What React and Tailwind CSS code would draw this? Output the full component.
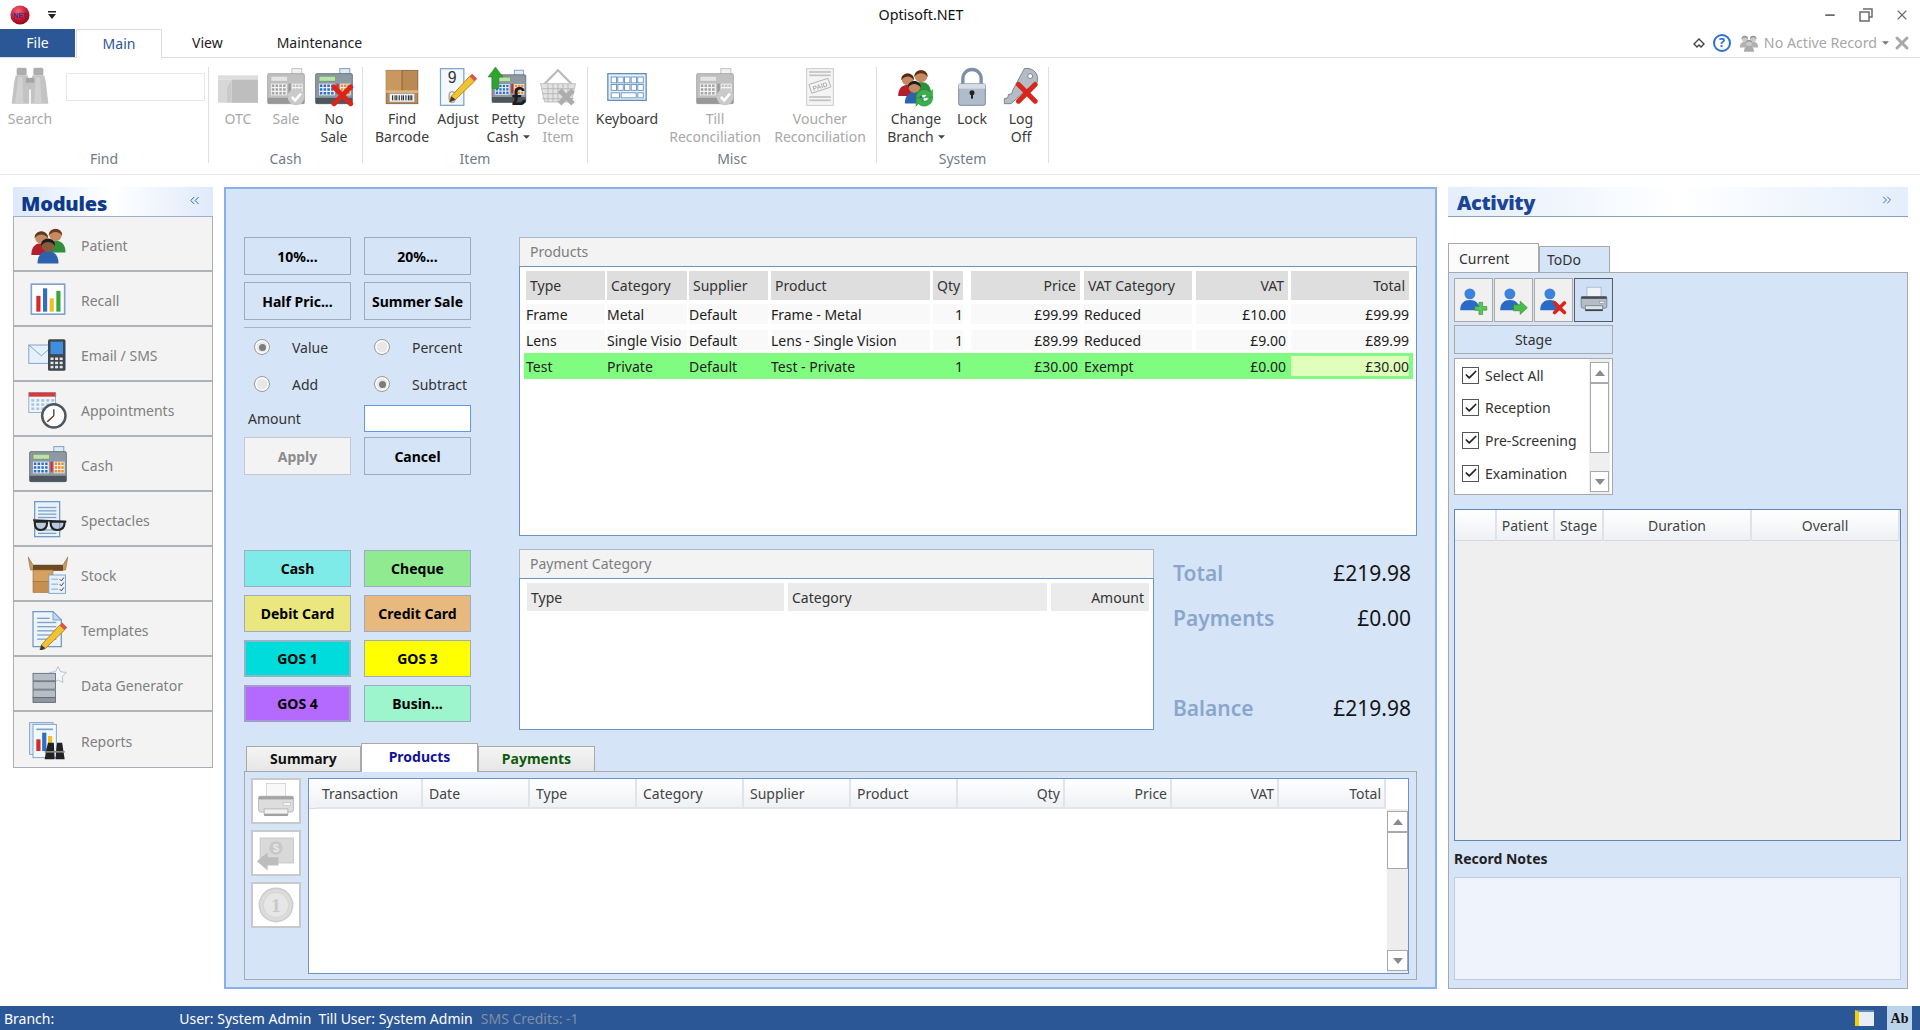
import { ChevronsLeft, ChevronsRight, Check, X, Minus } from "lucide-react";

const Svg = ({ children, className = "w-10 h-10" }) => (
  <svg viewBox="0 0 48 48" className={className}>{children}</svg>
);

const RedX = ({ x = 24, y = 24, s = 10, w = 6 }) => (
  <path d={`M${x} ${y}L${x + s * 2} ${y + s * 2}M${x + s * 2} ${y}L${x} ${y + s * 2}`} stroke="#d8261c" strokeWidth={w} strokeLinecap="round" />
);

const Person = ({ x, y, s = 1, shirt, hair = "#3d2a1c", skin = "#c58a62" }) => (
  <g transform={`translate(${x} ${y}) scale(${s})`}>
    <path d="M-12 25C-12 14-6 11 0 11C6 11 12 14 12 25Z" fill={shirt} />
    <circle cy="4" r="7.5" fill={skin} />
    <path d="M-8 5C-9-6 9-6 8 5C4-1-4-1-8 5Z" fill={hair} />
  </g>
);

const People = ({ className }) => (
  <Svg className={className}>
    <Person x={16} y={11} shirt="#b3202a" hair="#5a3a22" />
    <Person x={33} y={8} shirt="#2f8f3a" hair="#6b3a1e" />
    <Person x={24} y={20} s={1.05} shirt="#2d62ad" hair="#1e1e1e" skin="#8a5a3c" />
  </Svg>
);

const TillBody = () => (
  <>
    <rect x="31" y="2" width="12" height="11" fill="#dfeaf6" stroke="#6c8fb6" />
    <rect x="2" y="8" width="44" height="36" rx="1.5" fill="#8f99a3" stroke="#5c646c" />
    <rect x="6" y="11" width="20" height="6" fill="#b8e2a8" stroke="#5d7f52" strokeWidth=".6" />
    <rect x="6" y="20" width="19" height="14" fill="#e9eef3" />
    {[21, 25.5, 30].map((y) =>
      [7, 11.5, 16, 20.5].map((x) => <rect key={`${x}${y}`} x={x} y={y} width="3" height="3" fill="#2f6fc6" />)
    )}
    <rect x="27" y="20" width="2.6" height="12" fill="#d52b2b" />
    <rect x="31" y="20" width="13" height="14" fill="#e9eef3" />
    {[21, 25.5, 30].map((y) =>
      [32, 36, 40].map((x) => <rect key={`o${x}${y}`} x={x} y={y} width="3" height="3" fill="#ef8f2a" />)
    )}
    <rect x="2" y="37" width="44" height="7" fill="#4d555d" />
  </>
);

const TillCheck = ({ className }) => (
  <Svg className={className}>
    <TillBody />
    <circle cx="36" cy="36" r="10" fill="#a8a8a8" />
    <path d="M31 36l4 4 7-8" fill="none" stroke="#fff" strokeWidth="3" />
  </Svg>
);

const Binoculars = ({ className }) => (
  <Svg className={className}>
    <rect x="8" y="1" width="12" height="9" rx="2" fill="#777" />
    <rect x="28" y="1" width="12" height="9" rx="2" fill="#777" />
    <path d="M7 10h14l2 9v25H2l3-26z" fill="#9c9c9c" />
    <path d="M27 10h14l2 8 3 26H25V19z" fill="#9c9c9c" />
    <path d="M10 12h5l1 32H6zM31 12h5l2 32H29z" fill="#b4b4b4" />
    <rect x="19" y="13" width="10" height="6" fill="#6a6a6a" />
    <path d="M23 19h2v8h-2z" fill="#888" />
  </Svg>
);

const Otc = ({ className }) => (
  <Svg className={className}>
    <rect x="0" y="10" width="48" height="5" fill="#c8c8c8" />
    <rect x="16" y="15" width="32" height="28" fill="#949494" />
    <path d="M0 15h16l-6 10v18H0z" fill="#bdbdbd" />
    <path d="M10 25l6-10v28h-6z" fill="#a8a8a8" />
  </Svg>
);

const Barcode = ({ className }) => (
  <Svg className={className}>
    <rect x="5" y="4" width="38" height="40" fill="#b98a55" stroke="#8a6236" />
    <rect x="5" y="4" width="19" height="26" fill="#c9985f" />
    <path d="M24 4v26" stroke="#7f5a30" />
    <rect x="5" y="28" width="38" height="3" fill="#e2b77e" />
    <rect x="9" y="32" width="30" height="10" fill="#eef2f7" stroke="#8aa0b8" strokeWidth=".6" />
    {[12, 15, 17, 20, 23, 25, 28, 31, 33, 35].map((x) => (
      <rect key={x} x={x} y="34" width="1.4" height="6" fill="#333" />
    ))}
  </Svg>
);

const Pencil = ({ x = 0, y = 0 }) => (
  <g transform={`translate(${x} ${y})`}>
    <path d="M4 32L26 8l6 6L9 36l-7 3z" fill="#f2c230" stroke="#a67c12" strokeWidth="1" />
    <path d="M26 8l3-3 6 6-3 3z" fill="#d9534a" />
    <path d="M2 39l2-7 5 4z" fill="#3a3a3a" />
  </g>
);

const Adjust = ({ className }) => (
  <Svg className={className}>
    <rect x="3" y="2" width="28" height="44" fill="#f3f8fe" stroke="#7fa4cc" strokeWidth="1.5" />
    <text x="17" y="19" fontSize="19" textAnchor="middle" fontFamily="Liberation Sans" fill="#333">9</text>
    <text x="17" y="43" fontSize="19" textAnchor="middle" fontFamily="Liberation Sans" fill="#aaa">0</text>
    <Pencil x={12} y={3} />
  </Svg>
);

const PettyCash = ({ className }) => (
  <Svg className={className}>
    <g transform="translate(3 2) scale(.92)"><TillBody /></g>
    <path d="M9 0L18 12h-5v14H5V12H0z" fill="#2fa52f" stroke="#1e7a1e" strokeWidth=".6" />
    <text x="37" y="46" fontSize="30" fontWeight="bold" textAnchor="middle" fontFamily="Liberation Sans" fill="#1d1d1d">£</text>
  </Svg>
);

const Basket = ({ className }) => (
  <Svg className={className}>
    <path d="M8 20L24 4l16 16" fill="none" stroke="#8a8a8a" strokeWidth="2.5" />
    <path d="M3 20h42l-5 22H8z" fill="#cfcfcf" stroke="#8a8a8a" />
    {[12, 18, 24, 30, 36].map((x) => <path key={x} d={`M${x} 20v22`} stroke="#808080" />)}
    {[26, 32, 38].map((y) => <path key={y} d={`M5 ${y}h38`} stroke="#808080" />)}
    <path d="M26 28l16 16M42 28L26 44" stroke="#777" strokeWidth="6" />
  </Svg>
);

const Keyboard = ({ className }) => (
  <Svg className={className}>
    <rect x="1" y="8" width="46" height="32" fill="#e6eff9" stroke="#5b89bd" strokeWidth="1.5" />
    {[12, 21].map((y) =>
      [5, 13, 21, 29, 37].map((x) => <rect key={`${x}${y}`} x={x} y={y} width="6.5" height="7" fill="#fff" stroke="#5b89bd" />)
    )}
    <rect x="5" y="31" width="10" height="6" fill="#fff" stroke="#5b89bd" />
    <rect x="17" y="31" width="18" height="6" fill="#fff" stroke="#5b89bd" />
    <rect x="37" y="31" width="6.5" height="6" fill="#fff" stroke="#5b89bd" />
  </Svg>
);

const Voucher = ({ className }) => (
  <Svg className={className}>
    <rect x="8" y="2" width="32" height="44" fill="#eee" stroke="#999" />
    {[6, 10, 36, 40].map((y) => <path key={y} d={`M11 ${y}h26`} stroke="#999" strokeWidth="2" />)}
    <g transform="rotate(-18 24 23)">
      <rect x="12" y="17" width="24" height="11" fill="none" stroke="#777" />
      <text x="24" y="26" fontSize="8" fontWeight="bold" textAnchor="middle" fontFamily="Liberation Sans" fill="#777">PAID</text>
    </g>
  </Svg>
);

const ChangeBranch = ({ className }) => (
  <Svg className={className}>
    <Person x={14} y={11} s={0.95} shirt="#b3202a" hair="#4a2d18" />
    <Person x={30} y={7} shirt="#2f8f3a" hair="#5e3217" />
    <Person x={22} y={20} s={0.95} shirt="#2d62ad" hair="#1e1e1e" />
    <path d="M24 38a10 10 0 0 1 17-8l3-3v10h-10l3-3a6 6 0 0 0-9 4z" fill="#39b04a" stroke="#237a30" strokeWidth=".5" />
    <path d="M44 36a10 10 0 0 1-17 8l-3 3V37h10l-3 3a6 6 0 0 0 9-4z" fill="#39b04a" stroke="#237a30" strokeWidth=".5" />
  </Svg>
);

const Lock = ({ className }) => (
  <Svg className={className}>
    <path d="M13 22V14a11 11 0 0 1 22 0v8" fill="none" stroke="#7d8fa5" strokeWidth="4" />
    <rect x="8" y="20" width="32" height="26" rx="2" fill="#aebccb" stroke="#6d7b8b" />
    <rect x="8" y="20" width="32" height="6" fill="#d5dde6" />
    <circle cx="24" cy="31" r="3" fill="#222" />
    <rect x="22.8" y="31" width="2.4" height="7" fill="#222" />
  </Svg>
);

const LogOff = ({ className }) => (
  <Svg className={className}>
    <path d="M28 2c8-2 16 4 16 12 0 7-5 12-12 12L12 44H4v-6l4-1 1-4 4-1 1-4z" fill="#b5bcc5" stroke="#6d747d" />
    <circle cx="35" cy="11" r="3" fill="#fff" stroke="#6d747d" />
    <RedX x={21} y={21} s={10} w={6} />
  </Svg>
);

const BarChart = ({ className }) => (
  <Svg className={className}>
    <rect x="4" y="5" width="40" height="36" fill="#fff" stroke="#7fa4cc" strokeWidth="2" />
    <rect x="10" y="19" width="5" height="19" fill="#d62a2a" />
    <rect x="18" y="10" width="5" height="28" fill="#2f6fc6" />
    <rect x="26" y="22" width="5" height="16" fill="#f0c020" />
    <rect x="34" y="13" width="5" height="25" fill="#35a83c" />
  </Svg>
);

const MailPhone = ({ className }) => (
  <Svg className={className}>
    <rect x="1" y="12" width="30" height="22" fill="#e5f0fb" stroke="#6f97c4" />
    <path d="M1 12l15 13 15-13" fill="none" stroke="#6f97c4" />
    <rect x="24" y="5" width="21" height="38" rx="2" fill="#3e464e" />
    <rect x="27" y="8" width="15" height="15" fill="#3f8fe0" />
    {[27, 32, 37].map((y) => [27, 32.5, 38].map((x) => <rect key={`${x}${y}`} x={x} y={y} width="3.6" height="3" fill="#e5e5e5" />))}
  </Svg>
);

const CalClock = ({ className }) => (
  <Svg className={className}>
    <rect x="1" y="3" width="32" height="24" fill="#eef4fb" stroke="#7fa4cc" />
    <rect x="1" y="3" width="32" height="5" fill="#d63a3a" />
    {[11, 16, 21].map((y) => [4, 10, 16, 22, 28].map((x) => <rect key={`${x}${y}`} x={x} y={y} width="3.5" height="3" fill="#a9c3e2" />))}
    <circle cx="31" cy="31" r="14" fill="#fff" stroke="#4f565d" strokeWidth="3" />
    <path d="M31 31v-8M31 31l-8 7" stroke="#333" strokeWidth="1.5" />
    <path d="M31 31l-7 7" stroke="#d63a3a" strokeWidth="1.2" />
  </Svg>
);

const Spectacles = ({ className }) => (
  <Svg className={className}>
    <rect x="8" y="2" width="30" height="42" fill="#e9f1fa" stroke="#6f97c4" strokeWidth="1.5" />
    {[9, 13, 17, 21, 36, 40].map((y) => <path key={y} d={`M12 ${y}h22`} stroke="#7fa4cc" strokeWidth="1.6" />)}
    <path d="M6 24l40 2" stroke="#222" strokeWidth="2" />
    <path d="M8 26h15c0 7-3 10-8 10s-7-4-7-10zM27 26h17c0 7-3 10-9 10s-8-4-8-10z" fill="#8ca4bc" fillOpacity=".5" stroke="#222" strokeWidth="2.5" />
  </Svg>
);

const Stock = ({ className }) => (
  <Svg className={className}>
    <path d="M0 2l6 10h36l6-10-3 16H3z" fill="#c99a62" stroke="#8c6a3c" strokeWidth=".7" />
    <rect x="6" y="12" width="36" height="7" fill="#6d4a24" />
    <rect x="6" y="18" width="24" height="14" fill="#d5a160" stroke="#9a7038" strokeWidth=".7" />
    <rect x="6" y="32" width="24" height="13" fill="#c48f50" stroke="#9a7038" strokeWidth=".7" />
    <rect x="25" y="24" width="20" height="22" fill="#e8f1fa" stroke="#6f97c4" />
    {[29, 35, 41].map((y) => (
      <g key={y}>
        <path d={`M28 ${y}h8`} stroke="#6f97c4" />
        <path d={`M38 ${y}l2 2 3-4`} stroke="#222" fill="none" />
      </g>
    ))}
  </Svg>
);

const Templates = ({ className }) => (
  <Svg className={className}>
    <path d="M6 2h24l10 10v32H6z" fill="#eef4fb" stroke="#6f97c4" strokeWidth="1.5" />
    <path d="M30 2v10h10z" fill="#c5d8ec" stroke="#6f97c4" />
    {[10, 15, 20, 25, 30, 35].map((y) => <path key={y} d={`M11 ${y}h${y < 15 ? 15 : 23}`} stroke="#7fa4cc" strokeWidth="1.6" />)}
    <Pencil x={12} y={10} />
  </Svg>
);

const DataGen = ({ className }) => (
  <Svg className={className}>
    <path d="M36 2l3 6 7 1-5 5 1 7-6-3-6 3 1-7-5-5 7-1z" fill="#f5f8fc" stroke="#a5b8cc" />
    {[10, 20, 30].map((y) => (
      <rect key={y} x="6" y={y} width="27" height="9" fill="#b6bec7" stroke="#5f6870" />
    ))}
    <rect x="6" y="39" width="27" height="6" fill="#8e969e" stroke="#5f6870" />
  </Svg>
);

const Reports = ({ className }) => (
  <Svg className={className}>
    <rect x="2" y="2" width="28" height="38" fill="#dfeaf6" stroke="#6f97c4" />
    <rect x="6" y="4" width="28" height="40" fill="#f3f8fe" stroke="#6f97c4" />
    <path d="M10 10h20" stroke="#7fa4cc" strokeWidth="2" />
    <rect x="10" y="22" width="5" height="14" fill="#d62a2a" />
    <rect x="17" y="14" width="5" height="22" fill="#2f6fc6" />
    <rect x="24" y="18" width="5" height="18" fill="#f0c020" />
    <path d="M22 34l2-8h7l1 20H20zM34 34l1-8h6l3 20H33z" fill="#222" />
    <rect x="20" y="36" width="24" height="2" fill="#888" />
  </Svg>
);

const UserBase = () => (
  <>
    <circle cx="18" cy="13" r="9" fill="#3d82dc" />
    <path d="M2 40c0-12 7-17 16-17s16 5 16 17z" fill="#2b6ac6" />
  </>
);

const UserAdd = () => (
  <Svg className="w-[29px] h-[29px]">
    <UserBase />
    <path d="M26 34h7v-7h6v7h7v6h-7v7h-6v-7h-7z" fill="#5ec45e" stroke="#2c8a2c" />
  </Svg>
);
const UserNext = () => (
  <Svg className="w-[29px] h-[29px]">
    <UserBase />
    <path d="M24 31h11v-6l12 11-12 11v-6H24z" fill="#4cbb4c" stroke="#2c8a2c" />
  </Svg>
);
const UserDel = () => (
  <Svg className="w-[29px] h-[29px]">
    <UserBase />
    <RedX x={26} y={28} s={8} w={6} />
  </Svg>
);

const Printer = ({ className }) => (
  <Svg className={className}>
    <rect x="12" y="2" width="24" height="18" fill="#eef3f9" stroke="#8fa2b6" />
    <rect x="2" y="18" width="44" height="20" rx="3" fill="#b4bdc6" stroke="#59626b" />
    <rect x="2" y="18" width="44" height="4" fill="#444c54" />
    <rect x="33" y="26" width="9" height="4" fill="#e9eef3" stroke="#59626b" strokeWidth=".6" />
    <rect x="9" y="34" width="30" height="7" fill="#dfe5ea" stroke="#59626b" />
    <rect x="9" y="40" width="30" height="3" fill="#3f474e" />
  </Svg>
);

const MoneyBack = ({ className }) => (
  <Svg className={className}>
    <rect x="5" y="6" width="40" height="30" fill="#d9d9d9" stroke="#c4c4c4" />
    <circle cx="24" cy="18" r="8" fill="#c7c7c7" />
    <text x="24" y="23" fontSize="14" fontWeight="bold" textAnchor="middle" fontFamily="Liberation Sans" fill="#e6e6e6">$</text>
    <path d="M1 34l13-11v6h13v10H14v6z" fill="#bdbdbd" />
  </Svg>
);

const Coin = ({ className }) => (
  <Svg className={className}>
    <circle cx="24" cy="24" r="21" fill="#dcdcdc" stroke="#cdcdcd" strokeWidth="2" />
    <circle cx="24" cy="24" r="16" fill="#e6e6e6" stroke="#cfcfcf" />
    <text x="24" y="33" fontSize="25" textAnchor="middle" fontFamily="Liberation Serif" fontWeight="bold" fill="#c9c9c9">1</text>
  </Svg>
);

const Logo = () => (
  <svg viewBox="0 0 24 24" className="w-[20px] h-[20px]">
    <defs>
      <radialGradient id="logoRed" cx="40%" cy="30%" r="75%">
        <stop offset="0" stopColor="#f06a7a" />
        <stop offset="0.6" stopColor="#c9142f" />
        <stop offset="1" stopColor="#7d0a1c" />
      </radialGradient>
    </defs>
    <circle cx="12" cy="12" r="11.5" fill="url(#logoRed)" />
    <text x="12" y="15" fontSize="8" fontWeight="bold" textAnchor="middle" fontFamily="Liberation Sans" fill="#33308a">NET</text>
  </svg>
);

const Caret = ({ className = "" }) => (
  <svg viewBox="0 0 8 4" className={`inline-block w-[7px] h-[4px] ${className}`}>
    <path d="M0 0h8L4 4z" fill="currentColor" />
  </svg>
);

const RibbonItem = ({ w, label, line2, caret, off, icon: Icon, pad = "" }) => (
  <div className={`${w} ${pad} flex flex-col items-center shrink-0`}>
    <div className="h-[40px] flex items-center justify-center">
      <Icon className={`w-[40px] h-[40px] ${off ? "grayscale opacity-60" : ""}`} />
    </div>
    <div className={`mt-[3px] text-center leading-[18px] whitespace-nowrap ${off ? "text-[#a8a8a8]" : "text-[#3c3c3c]"}`}>
      <div>{label}</div>
      {line2 && (
        <div>
          {line2}
          {caret && <Caret className="ml-[4px] mb-[2px] text-[#444]" />}
        </div>
      )}
    </div>
  </div>
);

const RibbonGroup = ({ w, label, children, pad = "" }) => (
  <div className={`${w} h-[96px] mt-[9px] border-r border-[#dcdfe3] shrink-0`}>
    <div className={`flex ${pad} h-[83px]`}>{children}</div>
    <div className="text-center text-[#6f7b88] leading-[18px]">{label}</div>
  </div>
);

const modules = [
  ["Patient", People],
  ["Recall", BarChart],
  ["Email / SMS", MailPhone],
  ["Appointments", CalClock],
  ["Cash", (p) => <Svg {...p}><TillBody /></Svg>],
  ["Spectacles", Spectacles],
  ["Stock", Stock],
  ["Templates", Templates],
  ["Data Generator", DataGen],
  ["Reports", Reports],
];

const ActionBtn = ({ children, className = "", h = "h-[38px]" }) => (
  <div className={`w-[107px] ${h} border border-[#9fabc0] flex items-center justify-center font-bold text-black ${className}`}>
    {children}
  </div>
);

const Radio = ({ on, label }) => (
  <div className="w-[120px] shrink-0 flex items-center">
    <div className="ml-[10px] w-[16px] h-[16px] rounded-full border border-[#9a9a9a] bg-[#e8e8e8] flex items-center justify-center shadow-[inset_0_0_0_1.5px_#fff]">
      {on && <div className="w-[7px] h-[7px] rounded-full bg-[#7d7d7d]" />}
    </div>
    <span className="ml-[22px] text-[#333]">{label}</span>
  </div>
);

const prodCols = [
  ["w-[81px]", "w-[79px]"],
  ["w-[82px]", "w-[80px]"],
  ["w-[82px]", "w-[79px]"],
  ["w-[162px]", "w-[159px]"],
  ["w-[38px]", "w-[30px]"],
  ["w-[113px]", "w-[109px]"],
  ["w-[112px]", "w-[108px]"],
  ["w-[95px]", "w-[92px]"],
  ["w-[118px]", "w-[118px]"],
];

const prodHead = ["Type", "Category", "Supplier", "Product", "Qty", "Price", "VAT Category", "VAT", "Total"];
const rightCols = [4, 5, 7, 8];

const prodRows = [
  ["Frame", "Metal", "Default", "Frame - Metal", "1", "£99.99", "Reduced", "£10.00", "£99.99"],
  ["Lens", "Single Visio", "Default", "Lens - Single Vision", "1", "£89.99", "Reduced", "£9.00", "£89.99"],
  ["Test", "Private", "Default", "Test - Private", "1", "£30.00", "Exempt", "£0.00", "£30.00"],
];

const GroupHead = ({ children }) => (
  <div className="h-[29px] bg-[#f3f3f3] border border-b-0 border-[#a9b7c9] pl-[10px] pb-[1px] flex items-center text-[#7d7d7d]">
    {children}
  </div>
);

const ScrollBtn = ({ up }) => (
  <div className="h-[21px] bg-white border border-[#a9a9a9] flex items-center justify-center">
    <svg viewBox="0 0 10 6" className={`w-[10px] h-[6px] ${up ? "" : "rotate-180"}`}>
      <path d="M0 6L5 0l5 6z" fill="#8a8a8a" />
    </svg>
  </div>
);

const txHead = [
  ["Transaction", "text-left"],
  ["Date", "text-left"],
  ["Type", "text-left"],
  ["Category", "text-left"],
  ["Supplier", "text-left"],
  ["Product", "text-left"],
  ["Qty", "text-right"],
  ["Price", "text-right"],
  ["VAT", "text-right"],
  ["Total", "text-right"],
];

const PayBtn = ({ bg, label }) => (
  <div className={`w-[107px] h-[37px] flex items-center justify-center font-bold text-black ${bg}`}>{label}</div>
);

const Totals = ({ label, value, className = "" }) => (
  <div className={`flex justify-between items-center h-[30px] text-[21px] ${className}`}>
    <span className="text-[#8aa6cd] font-semibold">{label}</span>
    <span className="text-[#151515]">{value}</span>
  </div>
);

const stages = ["Select All", "Reception", "Pre-Screening", "Examination"];

const activityCols = [
  ["w-[42px]", ""],
  ["w-[58px]", "Patient"],
  ["w-[49px]", "Stage"],
  ["w-[148px]", "Duration"],
  ["w-[148px]", "Overall"],
];

export default function App() {
  return (
    <div className="w-[1920px] h-[1030px] bg-white flex flex-col overflow-hidden font-['Noto_Sans',sans-serif] text-[14px] text-[#333]">
      {/* title bar */}
      <div className="h-[29px] flex items-center shrink-0">
        <div className="ml-[10px]"><Logo /></div>
        <svg viewBox="0 0 8 8" className="ml-[18px] w-[8px] h-[8px] text-[#222]">
          <path d="M0 0h8v1.4H0zM0 3h8L4 8z" fill="currentColor" />
        </svg>
        <div className="ml-[815px] w-[100px] text-center text-[#111] text-[14.3px]">Optisoft.NET</div>
        <div className="ml-auto flex items-center text-[#6b6b6b]">
          <Minus className="w-[14px] h-[14px]" strokeWidth={3} />
          <svg viewBox="0 0 14 14" className="ml-[22px] w-[14px] h-[14px]">
            <path d="M4 1h9v8h-3M1 4h9v9H1z" fill="none" stroke="#6b6b6b" strokeWidth="1.5" />
          </svg>
          <X className="ml-[21px] mr-[10px] w-[16px] h-[16px]" strokeWidth={1.7} />
        </div>
      </div>

      {/* ribbon tabs */}
      <div className="h-[29px] flex shrink-0 border-b border-[#dcdcdc]">
        <div className="w-[75px] bg-[#2b5797] text-white flex items-center justify-center pb-[1px]">File</div>
        <div className="ml-[1px] w-[86px] bg-white border border-b-0 border-[#dcdcdc] text-[#2b5797] flex items-center justify-center h-[29px] pb-[2px]">Main</div>
        <div className="ml-[30px] flex items-center text-[#222] pb-[2px]">View</div>
        <div className="ml-[54px] flex items-center text-[#222] pb-[2px]">Maintenance</div>
        <div className="ml-auto flex items-center mr-[8px] pb-[1px]">
          <svg viewBox="0 0 12 10" className="w-[12px] h-[10px] mr-[8px]">
            <path d="M1 6l5-5 5 5-3 3-2-2-2 2z" fill="none" stroke="#444" strokeWidth="1.4" />
          </svg>
          <div className="w-[18px] h-[18px] rounded-full border-2 border-[#2f6fd0] text-[#2f6fd0] text-[13px] font-bold flex items-center justify-center">?</div>
          <Svg className="ml-[8px] w-[20px] h-[20px] grayscale opacity-50"><Person x={14} y={10} shirt="#666" /><Person x={34} y={10} shirt="#666" /><Person x={24} y={20} shirt="#555" /></Svg>
          <span className="ml-[5px] text-[#a8a8a8] text-[14.2px]">No Active Record</span>
          <Caret className="ml-[5px] text-[#777]" />
          <X className="ml-[3px] w-[20px] h-[20px] text-[#a8a8a8]" strokeWidth={3.5} />
        </div>
      </div>

      {/* ribbon */}
      <div className="h-[117px] flex shrink-0 border-b border-[#e8e8e8]">
        <RibbonGroup w="w-[209px]" label="Find" pad="pl-[2px]">
          <RibbonItem w="w-[56px]" label="Search" off icon={Binoculars} />
          <div className="ml-[8px] mt-[6px] w-[139px] h-[28px] border border-[#e8e8e8]" />
        </RibbonGroup>
        <RibbonGroup w="w-[154px]" label="Cash" pad="pl-[5px]">
          <RibbonItem w="w-[48px]" label="OTC" off icon={Otc} />
          <RibbonItem w="w-[48px]" label="Sale" off icon={TillCheck} />
          <RibbonItem
            w="w-[48px]"
            label="No"
            line2="Sale"
            icon={(p) => (
              <Svg {...p}>
                <TillBody />
                <RedX x={24} y={24} s={10} />
              </Svg>
            )}
          />
        </RibbonGroup>
        <RibbonGroup w="w-[225px]" label="Item" pad="pl-[9px]">
          <RibbonItem w="w-[60px]" label="Find" line2="Barcode" icon={Barcode} />
          <RibbonItem w="w-[52px]" label="Adjust" icon={Adjust} />
          <RibbonItem w="w-[48px]" label="Petty" line2="Cash" caret icon={PettyCash} />
          <RibbonItem w="w-[52px]" label="Delete" line2="Item" off icon={Basket} />
        </RibbonGroup>
        <RibbonGroup w="w-[289px]" label="Misc" pad="pl-[8px]">
          <RibbonItem w="w-[62px]" label="Keyboard" icon={Keyboard} />
          <RibbonItem w="w-[94px]" pad="ml-[10px]" label="Till" line2="Reconciliation" off icon={TillCheck} />
          <RibbonItem w="w-[94px]" pad="ml-[11px]" label="Voucher" line2="Reconciliation" off icon={Voucher} />
        </RibbonGroup>
        <RibbonGroup w="w-[172px]" label="System" pad="pl-[11px]">
          <RibbonItem w="w-[56px]" label="Change" line2="Branch" caret icon={ChangeBranch} />
          <RibbonItem w="w-[56px]" label="Lock" icon={Lock} />
          <RibbonItem w="w-[42px]" label="Log" line2="Off" icon={LogOff} />
        </RibbonGroup>
      </div>

      {/* body */}
      <div className="flex-1 flex pt-[12px] min-h-0">
        {/* modules */}
        <div className="ml-[13px] w-[200px] shrink-0">
          <div className="h-[30px] bg-gradient-to-r from-[#dce9fb] via-white to-[#dfeafa] border-b border-[#9fb0c4] flex items-center justify-between pl-[8px] pr-[11px]">
            <span className="font-black text-[20px] text-[#0f3a8c] leading-none font-['Open_Sans',sans-serif] tracking-[-0.2px] pt-[4px]">Modules</span>
            <ChevronsLeft className="w-[15px] h-[15px] text-[#1f4f9a] -mt-[3px]" strokeWidth={1.4} />
          </div>
          <div className="border border-[#a9afb5] border-t-0">
            {modules.map(([label, Icon], i) => (
              <div
                key={label}
                className={`h-[55px] pt-[3px] bg-[#f3f3f3] flex items-center ${i < 9 ? "border-b-2 border-[#aeb3b8]" : ""}`}
              >
                <div className="w-[67px] pl-[14px]">
                  <Icon className="w-[40px] h-[40px]" />
                </div>
                <span className="text-[#808080]">{label}</span>
              </div>
            ))}
          </div>
        </div>

        {/* main panel */}
        <div className="ml-[11px] w-[1213px] h-[802px] bg-[#d6e4f7] border-2 border-[#8ab0ea] shrink-0 pt-[48px] pl-[18px] flex flex-col">
          <div className="h-[505px] shrink-0 flex gap-[48px]">
            <div className="w-[227px] shrink-0">
              <div className="grid grid-cols-[107px_107px] gap-x-[13px] gap-y-[7px]">
                <ActionBtn>10%...</ActionBtn>
                <ActionBtn>20%...</ActionBtn>
                <ActionBtn>Half Pric...</ActionBtn>
                <ActionBtn>Summer Sale</ActionBtn>
              </div>
              <div className="mt-[7px] border-t border-[#a9b4c6]" />
              <div className="mt-[9px] flex flex-col gap-[17px]">
                <div className="flex h-[20px]">
                  <Radio on label="Value" />
                  <Radio label="Percent" />
                </div>
                <div className="flex h-[20px]">
                  <Radio label="Add" />
                  <Radio on label="Subtract" />
                </div>
              </div>
              <div className="mt-[11px] flex items-center h-[27px] justify-between">
                <span className="ml-[4px] text-[#333]">Amount</span>
                <div className="w-[107px] h-[27px] bg-white border border-[#5d9bea]" />
              </div>
              <div className="mt-[5px] flex gap-[13px]">
                <ActionBtn className="bg-[#f3f3f3] !text-[#8c8c8c] border-[#c3c9d2]">Apply</ActionBtn>
                <ActionBtn>Cancel</ActionBtn>
              </div>
              <div className="mt-[75px] grid grid-cols-[107px_107px] gap-x-[13px] gap-y-[8px]">
                <PayBtn bg="bg-[#7eebe8] border border-[#9fabc0]" label="Cash" />
                <PayBtn bg="bg-[#90ea90] border border-[#9fabc0]" label="Cheque" />
                <PayBtn bg="bg-[#e9e77e] border border-[#9fabc0]" label="Debit Card" />
                <PayBtn bg="bg-[#e8b97e] border border-[#9fabc0]" label="Credit Card" />
                <PayBtn bg="bg-[#00dcdc] border-2 border-[#8fb6c6]" label="GOS 1" />
                <PayBtn bg="bg-[#ffff00] border border-[#9fabc0]" label="GOS 3" />
                <PayBtn bg="bg-[#b469ff] border-2 border-[#a69bd0]" label="GOS 4" />
                <PayBtn bg="bg-[#9cf5cc] border border-[#9fabc0]" label="Busin..." />
              </div>
            </div>

            <div className="w-[898px] shrink-0">
              {/* products */}
              <GroupHead>Products</GroupHead>
              <div className="h-[270px] bg-white border border-[#6d93c2] pt-[4px]">
                <div className="flex pl-[6px] h-[29px]">
                  {prodHead.map((h, i) => (
                    <div key={h} className={`${prodCols[i][0]} shrink-0`}>
                      <div className={`${prodCols[i][1]} h-[29px] bg-[#dedede] flex items-center px-[4px] ${rightCols.includes(i) && i !== 4 ? "justify-end" : ""}`}>
                        {h}
                      </div>
                    </div>
                  ))}
                </div>
                <div className="mt-[1px]">
                  {prodRows.map((row, r) => (
                    <div key={row[0]} className={`flex items-center h-[26px] ${r === 2 ? "bg-[#80fc80] ml-[4px] mr-[3px] pl-[2px]" : "pl-[6px]"}`}>
                      {row.map((c, i) => (
                        <div key={i} className={`${prodCols[i][0]} shrink-0`}>
                          <div
                            className={`${prodCols[i][1]} h-[20px] flex items-center overflow-hidden whitespace-nowrap ${r < 2 ? "bg-[#f9f9f9]" : ""} ${r === 2 && i === 8 ? "bg-[#e0ffbb]" : ""} ${rightCols.includes(i) ? "justify-end" : ""} ${i === 5 || i === 7 ? "pr-[2px]" : ""} text-[#222]`}
                          >
                            {c}
                          </div>
                        </div>
                      ))}
                    </div>
                  ))}
                </div>
              </div>

              {/* payment + totals */}
              <div className="mt-[13px] flex h-[181px]">
                <div className="w-[635px] shrink-0">
                  <GroupHead>Payment Category</GroupHead>
                  <div className="h-[152px] bg-white border border-[#6d93c2] pt-[4px] pl-[7px] flex gap-[4px]">
                    <div className="w-[257px] h-[28px] bg-[#ebebeb] flex items-center px-[4px]">Type</div>
                    <div className="w-[259px] h-[28px] bg-[#ebebeb] flex items-center px-[4px]">Category</div>
                    <div className="w-[98px] h-[28px] bg-[#ebebeb] flex items-center justify-end px-[5px]">Amount</div>
                  </div>
                </div>
                <div className="ml-[19px] w-[238px] pt-[10px]">
                  <Totals label="Total" value="£219.98" />
                  <Totals label="Payments" value="£0.00" className="mt-[15px]" />
                  <Totals label="Balance" value="£219.98" className="mt-[60px]" />
                </div>
              </div>
            </div>
          </div>

          {/* bottom tab area */}
          <div className="w-[1173px]">
            <div className="flex items-end h-[29px] pl-[2px]">
              <div className="w-[115px] h-[25px] bg-gradient-to-b from-[#f5f5f5] to-[#e6e6e6] border border-b-0 border-[#a9a9a9] font-bold text-[#111] flex items-center justify-center pb-[2px]">Summary</div>
              <div className="w-[117px] h-[29px] bg-white border border-b-0 border-[#a9a9a9] font-bold text-[#12129a] flex items-center justify-center relative top-[1px] pb-[4px]">Products</div>
              <div className="w-[117px] h-[25px] bg-gradient-to-b from-[#f5f5f5] to-[#e6e6e6] border border-b-0 border-[#a9a9a9] font-bold text-[#0d5a0d] flex items-center justify-center pb-[2px]">Payments</div>
            </div>
            <div className="h-[209px] border border-[#a9a9a9] pt-[6px] pl-[6px] flex">
              <div className="flex flex-col gap-[6px] w-[50px]">
                <div className="h-[46px] bg-white border-2 border-[#c9c9c9] flex items-center justify-center">
                  <Printer className="w-[38px] h-[38px] grayscale opacity-50" />
                </div>
                <div className="h-[46px] bg-white border-2 border-[#c9c9c9] flex items-center justify-center">
                  <MoneyBack className="w-[40px] h-[40px]" />
                </div>
                <div className="h-[46px] bg-white border-2 border-[#c9c9c9] flex items-center justify-center">
                  <Coin className="w-[38px] h-[38px]" />
                </div>
              </div>
              <div className="ml-[7px] w-[1101px] h-[196px] bg-white border border-[#6d93c2] flex flex-col">
                <div className="flex h-[30px] shrink-0">
                  <div className="w-[7px] h-[30px] bg-gradient-to-b from-white to-[#eef1f5] border-b border-[#dcdcdc]" />
                  {txHead.map(([h, a]) => (
                    <div key={h} className={`w-[107px] h-[30px] bg-gradient-to-b from-white to-[#eef1f5] border-b-2 border-r-2 border-[#e2e4e8] pl-[6px] pr-[3px] flex items-center ${a === "text-right" ? "justify-end" : ""} text-[#444] ${a}`}>
                      {h}
                    </div>
                  ))}
                </div>
                <div className="flex-1 flex justify-end">
                  <div className="w-[21px] bg-[#ededed] pt-[2px] pb-[2px] flex flex-col">
                    <ScrollBtn up />
                    <div className="h-[37px] bg-white border border-[#a9a9a9]" />
                    <div className="flex-1" />
                    <ScrollBtn />
                  </div>
                </div>
              </div>
            </div>
          </div>
        </div>

        {/* activity */}
        <div className="ml-[11px] w-[460px] shrink-0 flex flex-col h-[802px]">
          <div className="h-[30px] shrink-0 bg-gradient-to-r from-[#e4eefc] via-white to-[#e4eefc] border-b border-[#8aa0b8] flex items-center justify-between pl-[9px] pr-[14px]">
            <span className="font-black text-[20px] text-[#1c4596] leading-none font-['Open_Sans',sans-serif] tracking-[-0.4px] pt-[3px]">Activity</span>
            <ChevronsRight className="w-[14px] h-[14px] text-[#1f4f9a] -mt-[3px]" strokeWidth={1.4} />
          </div>
          <div className="mt-[26px] flex items-end h-[29px] shrink-0">
            <div className="w-[91px] h-[29px] bg-[#fbfbfb] border border-b-0 border-[#a9a9a9] flex items-center pl-[10px]">Current</div>
            <div className="w-[71px] h-[26px] bg-[#d6e4f7] border border-b-0 border-[#a9a9a9] flex items-center pl-[7px]">ToDo</div>
          </div>
          <div className="flex-1 bg-[#d6e4f7] border border-[#a9a9a9] pt-[5px] pl-[5px] pr-[6px] flex flex-col min-h-0">
            <div className="flex gap-[1px] h-[44px]">
              {[UserAdd, UserNext, UserDel].map((I, i) => (
                <div key={i} className="w-[39px] h-[44px] bg-[#f0f0f0] border border-[#a9a9a9] flex items-center justify-center"><I /></div>
              ))}
              <div className="w-[39px] h-[44px] bg-[#cfdff5] border border-[#555c66] flex items-center justify-center">
                <Printer className="w-[28px] h-[28px]" />
              </div>
            </div>
            <div className="mt-[3px] w-[159px] h-[29px] border border-[#a9a9a9] flex items-center justify-center">Stage</div>
            <div className="mt-[4px] w-[159px] h-[137px] bg-white border border-[#a9a9a9] flex">
              <div className="flex-1">
                {stages.map((s) => (
                  <div key={s} className="h-[32.6px] flex items-center pl-[7px]">
                    <div className="w-[17px] h-[17px] border border-[#555] flex items-center justify-center">
                      <Check className="w-[14px] h-[14px] text-[#222]" strokeWidth={3} />
                    </div>
                    <span className="ml-[6px] whitespace-nowrap">{s}</span>
                  </div>
                ))}
              </div>
              <div className="w-[21px] bg-[#efefef] mr-[2px] pt-[3px] pb-[2px] px-[1px] flex flex-col">
                <ScrollBtn up />
                <div className="h-[70px] bg-white border border-[#a9a9a9]" />
                <div className="flex-1" />
                <ScrollBtn />
              </div>
            </div>
            <div className="mt-[14px] w-[447px] h-[332px] bg-[#efefef] border border-[#5f88b8] shrink-0">
              <div className="flex h-[31px] bg-gradient-to-b from-white to-[#eef1f5] border-b border-[#d5d8dc]">
                {activityCols.map(([w, h], i) => (
                  <div key={i} className={`${w} h-[31px] border-r-2 border-[#e0e2e6] flex items-center justify-center text-[#444]`}>{h}</div>
                ))}
              </div>
            </div>
            <div className="mt-[9px] font-bold text-[#222] leading-[18px]">Record Notes</div>
            <div className="mt-[9px] w-[447px] h-[103px] bg-[#eef3fc] border border-[#c0cbdd]" />
          </div>
        </div>
      </div>

      {/* status bar */}
      <div className="h-[24px] bg-[#2b5797] shrink-0 flex items-center text-white text-[14px]">
        <span className="ml-[4px]">Branch:</span>
        <span className="ml-[125px]">User: System Admin</span>
        <span className="ml-[7px]">Till User: System Admin</span>
        <span className="ml-[8px] text-[#7d8ea8]">SMS Credits: -1</span>
        <div className="ml-auto flex items-center">
          <div className="w-[19px] h-[16px] bg-[#e8eef8] border-l-4 border-[#f5d000] border-t-2 border-t-[#5b89bd]" />
          <div className="ml-[13px] mr-[8px] w-[25px] h-[24px] bg-[#bcd4ea] text-[#111] text-[14px] font-bold font-['Liberation_Serif',serif] flex items-center justify-center">Ab</div>
        </div>
      </div>
    </div>
  );
}
